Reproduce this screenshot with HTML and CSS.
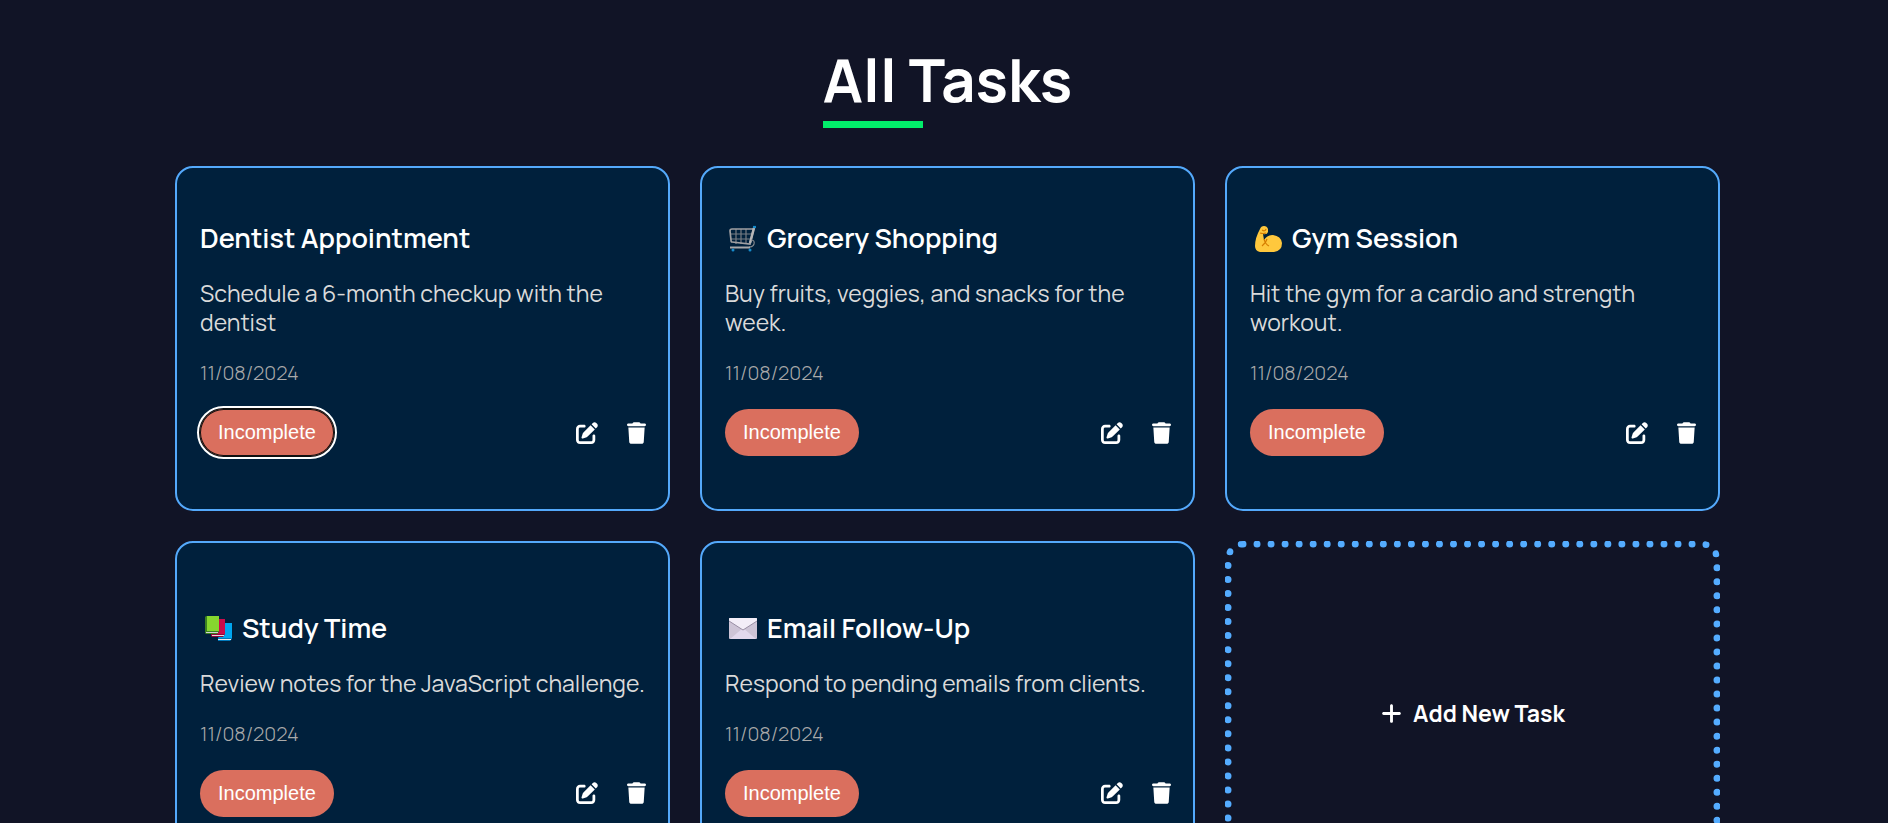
FILE: index.html
```html
<!DOCTYPE html>
<html lang="en">
<head>
<meta charset="utf-8">
<title>All Tasks</title>
<link rel="stylesheet" href="styles.css">
</head>
<body>
<svg class="sprite" aria-hidden="true">
  <symbol id="edit" viewBox="0 0 512 512"><path d="M471.6 21.7c-21.9-21.9-57.3-21.9-79.2 0L362.3 51.7l97.9 97.9 30.1-30.1c21.9-21.9 21.9-57.3 0-79.2L471.6 21.7zm-299.2 220c-6.1 6.1-10.8 13.6-13.5 21.9l-29.6 88.8c-2.9 8.6-.6 18.1 5.8 24.6s15.9 8.7 24.6 5.8l88.8-29.6c8.2-2.7 15.7-7.4 21.9-13.5L437.7 172.3 339.7 74.3 172.4 241.7zM96 64C43 64 0 107 0 160V416c0 53 43 96 96 96H352c53 0 96-43 96-96V320c0-17.7-14.3-32-32-32s-32 14.3-32 32v96c0 17.7-14.3 32-32 32H96c-17.7 0-32-14.3-32-32V160c0-17.7 14.3-32 32-32h96c17.7 0 32-14.3 32-32s-14.3-32-32-32H96z"/></symbol>
  <symbol id="trash" viewBox="0 0 448 512"><path d="M135.2 17.7L128 32H32C14.3 32 0 46.3 0 64S14.3 96 32 96H416c17.7 0 32-14.3 32-32s-14.3-32-32-32H320l-7.2-14.3C307.4 6.8 296.3 0 284.2 0H163.8c-12.1 0-23.2 6.8-28.6 17.7zM416 128H32L53.2 467c1.6 25.3 22.6 45 47.9 45H346.9c25.3 0 46.3-19.7 47.9-45L416 128z"/></symbol>
  <symbol id="plus" viewBox="0 0 448 512"><path d="M256 80c0-17.7-14.3-32-32-32s-32 14.3-32 32V224H48c-17.7 0-32 14.3-32 32s14.3 32 32 32H192V432c0 17.7 14.3 32 32 32s32-14.3 32-32V288H400c17.7 0 32-14.3 32-32s-14.3-32-32-32H256V80z"/></symbol>
</svg>
<main class="page">
  <h1 class="page-title">All Tasks</h1>
  <div class="task-grid">
    <article class="card">
      <h2 class="card-title">Dentist Appointment</h2>
      <p class="card-text">Schedule a 6-month checkup with the dentist</p>
      <p class="card-date">11/08/2024</p>
      <div class="card-footer">
        <button class="status is-focused" type="button">Incomplete</button>
        <button class="icon-button" type="button" aria-label="Edit task"><svg class="icon-edit"><use href="#edit"/></svg></button>
        <button class="icon-button" type="button" aria-label="Delete task"><svg class="icon-trash"><use href="#trash"/></svg></button>
      </div>
    </article>
    <article class="card">
      <h2 class="card-title">
        <svg class="emoji" viewBox="0 0 28 28" aria-hidden="true" fill="none">
          <path d="M7 4v15M12 4v15M17 4v15M2 9h22M2 14h21" stroke="#777c83" stroke-width="1.2"/>
          <path d="M25 2L21 19L3 17Q2 17 2 15L1 6Q1 4 3 4H24" stroke="#a0a0a3" stroke-width="1.7"/>
          <path d="M25 3L21 18" stroke="#b6b6b8" stroke-width="2.5"/>
          <path d="M22 15q4 0 3 4q-1 3-5 3" stroke="#85898f" stroke-width="1.2"/>
          <path d="M1 22.500H21" stroke="#a8a8aa" stroke-width="2"/>
          <circle cx="4" cy="25" r="1.500" fill="#168bcb"/><circle cx="21" cy="25" r="1.500" fill="#168bcb"/>
          <path d="M24 2h3" stroke="#168bcb" stroke-width="2.200"/>
        </svg>
        Grocery Shopping
      </h2>
      <p class="card-text">Buy fruits, veggies, and snacks for the week.</p>
      <p class="card-date">11/08/2024</p>
      <div class="card-footer">
        <button class="status" type="button">Incomplete</button>
        <button class="icon-button" type="button" aria-label="Edit task"><svg class="icon-edit"><use href="#edit"/></svg></button>
        <button class="icon-button" type="button" aria-label="Delete task"><svg class="icon-trash"><use href="#trash"/></svg></button>
      </div>
    </article>
    <article class="card">
      <h2 class="card-title">
        <svg class="emoji" viewBox="0 0 28 28" aria-hidden="true">
          <path d="M6 4Q7 1 10 1Q13 1 14 4L14 7Q13 10 9 9L10 15Q13 10 19 10Q27 11 28 18Q28 26 20 27H6Q1 26 1 21Q1 13 6 4Z" fill="#ffc83d"/>
          <path d="M8 5Q11 7 12 4M6 8Q9 9 12 8M10 14Q11 19 15 21M13 14Q12 18 8 21" fill="none" stroke="#d67d00" stroke-width="1.200"/>
        </svg>
        Gym Session
      </h2>
      <p class="card-text">Hit the gym for a cardio and strength workout.</p>
      <p class="card-date">11/08/2024</p>
      <div class="card-footer">
        <button class="status" type="button">Incomplete</button>
        <button class="icon-button" type="button" aria-label="Edit task"><svg class="icon-edit"><use href="#edit"/></svg></button>
        <button class="icon-button" type="button" aria-label="Delete task"><svg class="icon-trash"><use href="#trash"/></svg></button>
      </div>
    </article>
    <article class="card">
      <h2 class="card-title">
        <svg class="emoji" viewBox="0 0 28 28" aria-hidden="true">
          <path d="M14 8H28V24L26 26H14Z" fill="#0078ba"/><path d="M15 8H28V23H15Z" fill="#00a6f0"/><path d="M14 24H27V25H14Z" fill="#eee"/>
          <path d="M7 4H21V19L19 22H8L7 21Z" fill="#8f0838"/><path d="M8 4H21V19H8Z" fill="#ca0b4a"/><path d="M8 20H20V21H8Z" fill="#e8d9dc"/>
          <path d="M1 2L2 1H15V17L13 19H2L1 18Z" fill="#3b8020"/><path d="M3 1H15V16H3Z" fill="#86d72f"/><path d="M2 17H14V18H2Z" fill="#d3d3d3"/>
        </svg>
        Study Time
      </h2>
      <p class="card-text">Review notes for the JavaScript challenge.</p>
      <p class="card-date">11/08/2024</p>
      <div class="card-footer">
        <button class="status" type="button">Incomplete</button>
        <button class="icon-button" type="button" aria-label="Edit task"><svg class="icon-edit"><use href="#edit"/></svg></button>
        <button class="icon-button" type="button" aria-label="Delete task"><svg class="icon-trash"><use href="#trash"/></svg></button>
      </div>
    </article>
    <article class="card">
      <h2 class="card-title">
        <svg class="emoji" viewBox="0 0 28 28" aria-hidden="true">
          <rect y="3" width="28" height="21" rx="1" fill="#cdc4d6"/>
          <path d="M1 24L14 13L27 24Z" fill="#e1d8ec"/>
          <path d="M0 5V4Q0 3 1 3H27Q28 3 28 4V6L14 15L0 6Z" fill="#f3eef8"/>
          <path d="M0 6L14 15L28 6" fill="none" stroke="#998ea4"/>
        </svg>
        Email Follow-Up
      </h2>
      <p class="card-text">Respond to pending emails from clients.</p>
      <p class="card-date">11/08/2024</p>
      <div class="card-footer">
        <button class="status" type="button">Incomplete</button>
        <button class="icon-button" type="button" aria-label="Edit task"><svg class="icon-edit"><use href="#edit"/></svg></button>
        <button class="icon-button" type="button" aria-label="Delete task"><svg class="icon-trash"><use href="#trash"/></svg></button>
      </div>
    </article>
    <button class="add-card" type="button"><svg class="icon-plus" aria-hidden="true"><use href="#plus"/></svg>Add New Task</button>
  </div>
</main>
</body>
</html>
```
FILE: styles.css
```css
* {
  box-sizing: border-box;
}

body {
  margin: 0;
  background: #111426;
  color: #fff;
  font-family: Manrope, Inter, sans-serif;
}

.sprite {
  display: none;
}

.page {
  display: flex;
  flex-direction: column;
  align-items: center;
  height: 100vh;
  padding: 43px 168px 0 175px;
  overflow: hidden;
}

.page-title {
  margin: 0 0 38px;
  font-size: 60px;
  font-weight: 700;
  line-height: 72px;
}

.page-title::after {
  content: "";
  display: block;
  width: 100px;
  height: 7px;
  margin-top: 6px;
  background: #02ee6a;
}

.task-grid {
  display: grid;
  grid-template-columns: repeat(3, minmax(0, 1fr));
  grid-auto-rows: minmax(345px, auto);
  gap: 30px;
  width: 100%;
}

.card {
  display: flex;
  flex-direction: column;
  justify-content: center;
  padding: 20px 22px 20px 23px;
  border: 2px solid #54a9fb;
  border-radius: 18px;
  background: #00203c;
}

.card-title {
  display: flex;
  align-items: center;
  gap: 10px;
  margin: 0 0 24px;
  font-size: 27px;
  font-weight: 600;
  line-height: 34px;
}

.emoji {
  flex: none;
  width: 28px;
  height: 28px;
  margin-top: 2px;
  margin-left: 4px;
}

.card-text {
  margin: 0 0 24px;
  color: #dadada;
  font-size: 23px;
  line-height: 29px;
}

.card-date {
  margin: 0 0 24px;
  color: #aaa;
  font-size: 20px;
  font-weight: 300;
  line-height: 24px;
}

.card-footer {
  display: flex;
  align-items: center;
  gap: 29px;
}

button {
  border: 0;
  background: none;
  color: #fff;
  cursor: pointer;
}

.status {
  margin-right: auto;
  padding: 12px 18px;
  border-radius: 24px;
  background: #da6f5e;
  font: 20px/23px "Liberation Sans", Arial, sans-serif;
}

.status.is-focused {
  outline: 2px solid #fff;
  outline-offset: 1px;
  box-shadow: 0 0 0 1px #101010, inset 0 0 0 1px #101010;
}

.icon-button {
  display: flex;
  padding: 0;
}

.icon-edit,
.icon-trash {
  width: 22px;
  height: 22px;
  fill: currentColor;
}

.icon-trash {
  width: 19px;
}

.icon-plus {
  width: 23px;
  height: 23px;
  fill: currentColor;
}

.add-card {
  display: flex;
  align-items: center;
  justify-content: center;
  gap: 10px;
  padding: 20px;
  border: 7px dotted #54acff;
  border-radius: 18px;
  font: 700 23px/29px Manrope, Inter, sans-serif;
}
```
